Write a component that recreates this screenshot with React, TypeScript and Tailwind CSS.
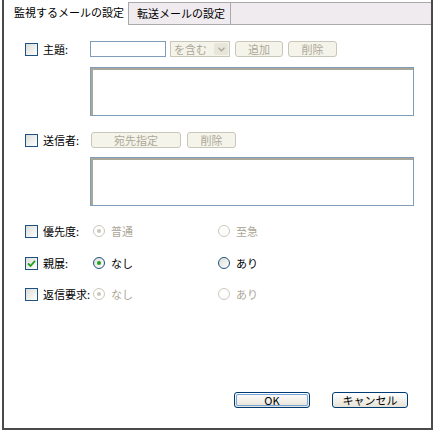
import React from "react";

const font = { fontFamily: '"Noto Sans CJK JP", "Liberation Sans", sans-serif' };

function CheckBox({ checked = false }: { checked?: boolean }) {
  return (
    <div className="w-[13px] h-[13px] border border-[#1c5180] bg-gradient-to-br from-[#dcdcd7] to-white flex items-center justify-center shrink-0">
      {checked && (
        <svg width="9" height="9" viewBox="0 0 9 9">
          <path d="M1 4.5 L3.5 7 L8 1.8" stroke="#21a121" strokeWidth="1.8" fill="none" />
        </svg>
      )}
    </div>
  );
}

function Radio({ on = false, disabled = false }: { on?: boolean; disabled?: boolean }) {
  return (
    <div
      className={
        "w-[12px] h-[12px] rounded-full border flex items-center justify-center shrink-0 " +
        (disabled ? "border-[#cac8bb] bg-white" : "border-[#1c5180] bg-gradient-to-br from-[#dcdcd7] to-white")
      }
    >
      {on && <div className={"w-[4px] h-[4px] rounded-full " + (disabled ? "bg-[#cac8bb]" : "bg-[#21a121]")} />}
    </div>
  );
}

function DisabledButton({ label, w }: { label: string; w: string }) {
  return (
    <div className={"h-[16px] rounded-[3px] border border-[#c9c7ba] bg-[#f5f4ea] text-[#aca899] text-[11px] flex items-center justify-center " + w}>
      {label}
    </div>
  );
}

function TextArea() {
  return (
    <div className="ml-[65px] w-[324px] h-[49px] border border-[#7f9db9] bg-white">
      <div className="w-full h-full border-t-2 border-l-2 border-[#aca899]" />
    </div>
  );
}

function Label({ text }: { text: string }) {
  return <span className="ml-[5px] text-[11px] text-black leading-none">{text}</span>;
}

function OptionRow({
  checked,
  label,
  a,
  b,
  disabled,
  mt,
}: {
  checked?: boolean;
  label: string;
  a: string;
  b: string;
  disabled?: boolean;
  mt: string;
}) {
  const tc = disabled ? "text-[#aca899]" : "text-black";
  return (
    <div className={"flex items-center h-[16px] " + mt}>
      <CheckBox checked={checked} />
      <div className="w-[55px] flex">
        <Label text={label} />
      </div>
      <div className="w-[125px] flex items-center">
        <Radio on disabled={disabled} />
        <span className={"ml-[6px] text-[11px] leading-none " + tc}>{a}</span>
      </div>
      <div className="flex items-center">
        <Radio disabled={disabled} />
        <span className={"ml-[6px] text-[11px] leading-none " + tc}>{b}</span>
      </div>
    </div>
  );
}

function XPButton({ label, focus }: { label: string; focus?: boolean }) {
  return (
    <div className="w-[76px] h-[16px] rounded-[3px] border border-[#003c74] bg-gradient-to-b from-white to-[#e6e3d6] flex items-center justify-center">
      <div
        className={
          "w-[72px] h-[12px] rounded-[2px] flex items-center justify-center text-[11px] text-black leading-none " +
          (focus ? "shadow-[inset_0_0_0_1px_#7aa3de]" : "")
        }
      >
        {label}
      </div>
    </div>
  );
}

export default function App() {
  return (
    <div className="w-[435px] h-[433px] bg-white" style={font}>
      <div className="ml-[2px] w-[431px] h-[430px] border-l-2 border-r-2 border-b-2 border-[#4a4a4a] flex flex-col">
        {/* Tabs */}
        <div className="flex h-[25px]">
          <div className="w-[124px] bg-white flex items-center pl-[10px] text-[11px] text-black">
            監視するメールの設定
          </div>
          <div className="w-[103px] mt-[2px] bg-[#efebef] border-l border-r border-t border-b border-[#a9a9a9] flex items-center pl-[8px] text-[11px] text-black">
            転送メールの設定
          </div>
          <div className="flex-1 mt-[2px] bg-[#efebef] border-t border-b border-[#a9a9a9]" />
        </div>

        <div className="pl-[21px] flex flex-col">
          {/* Subject */}
          <div className="flex items-center h-[16px] mt-[16px]">
            <CheckBox />
            <div className="w-[52px] flex">
              <Label text="主題:" />
            </div>
            <div className="w-[76px] h-[16px] border border-[#7f9db9] bg-white" />
            <div className="ml-[4px] w-[60px] h-[16px] border border-[#c9c7ba] bg-[#f5f4ea] flex items-center">
              <span className="flex-1 pl-[3px] text-[11px] text-[#aca899] leading-none">を含む</span>
              <div className="w-[14px] h-[12px] mr-[1px] bg-[#e8e6da] rounded-[2px] flex items-center justify-center">
                <svg width="7" height="5" viewBox="0 0 7 5">
                  <path d="M0.5 0.8 L3.5 3.8 L6.5 0.8" stroke="#aca899" strokeWidth="1.3" fill="none" />
                </svg>
              </div>
            </div>
            <div className="ml-[5px]">
              <DisabledButton label="追加" w="w-[48px]" />
            </div>
            <div className="ml-[5px]">
              <DisabledButton label="削除" w="w-[49px]" />
            </div>
          </div>
          <div className="mt-[10px]">
            <TextArea />
          </div>

          {/* Sender */}
          <div className="flex items-center h-[16px] mt-[16px]">
            <CheckBox />
            <div className="w-[53px] flex">
              <Label text="送信者:" />
            </div>
            <DisabledButton label="宛先指定" w="w-[90px]" />
            <div className="ml-[6px]">
              <DisabledButton label="削除" w="w-[49px]" />
            </div>
          </div>
          <div className="mt-[9px]">
            <TextArea />
          </div>

          <OptionRow label="優先度:" a="普通" b="至急" disabled mt="mt-[17px]" />
          <OptionRow checked label="親展:" a="なし" b="あり" mt="mt-[16px]" />
          <OptionRow label="返信要求:" a="なし" b="あり" disabled mt="mt-[15px]" />
        </div>

        <div className="mt-auto mb-[20px] flex justify-end pr-[23px] gap-[22px]">
          <XPButton label="OK" focus />
          <XPButton label="キャンセル" />
        </div>
      </div>
    </div>
  );
}
